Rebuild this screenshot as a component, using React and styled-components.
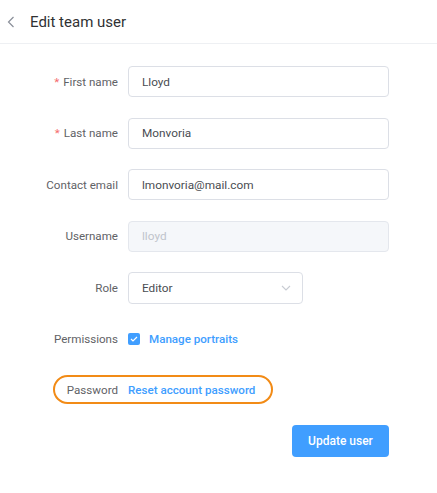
import React from 'react';
import styled, { createGlobalStyle } from 'styled-components';

const GlobalStyle = createGlobalStyle`
  body {
    margin: 0;
    background: #fff;
    font-family: Roboto, "Liberation Sans", Arial, sans-serif;
  }
`;

const ChevronLeft = () => (
  <svg width="8" height="12" viewBox="0 0 8 12" fill="none">
    <path d="M6.5 1L1.5 6l5 5" stroke="#8a8f99" strokeWidth="1.2" />
  </svg>
);

const ChevronDown = () => (
  <svg width="10" height="6" viewBox="0 0 10 6" fill="none">
    <path d="M1 1l4 4 4-4" stroke="#c8ccd3" strokeWidth="1.1" />
  </svg>
);

const Check = () => (
  <svg width="8" height="6" viewBox="0 0 8 6" fill="none">
    <path d="M1 3l2 2 4-4" stroke="#fff" strokeWidth="1.2" />
  </svg>
);

const App = () => {
  return (
    <Page>
      <GlobalStyle />
      <Header>
        <BackButton><ChevronLeft /></BackButton>
        <Title>Edit team user</Title>
      </Header>
      <Form>
        <Row>
          <Label required>First name</Label>
          <Input defaultValue="Lloyd" />
        </Row>
        <Row>
          <Label required>Last name</Label>
          <Input defaultValue="Monvoria" />
        </Row>
        <Row>
          <Label>Contact email</Label>
          <Input defaultValue="lmonvoria@mail.com" />
        </Row>
        <Row>
          <Label>Username</Label>
          <Input defaultValue="lloyd" disabled />
        </Row>
        <Row>
          <Label>Role</Label>
          <Select>
            <span>Editor</span>
            <ChevronDown />
          </Select>
        </Row>
        <Row>
          <Label>Permissions</Label>
          <CheckItem>
            <Box><Check /></Box>
            <LinkText>Manage portraits</LinkText>
          </CheckItem>
        </Row>
        <Highlight>
          <Label>Password</Label>
          <LinkText>Reset account password</LinkText>
        </Highlight>
        <Actions>
          <Button>Update user</Button>
        </Actions>
      </Form>
    </Page>
  );
};

const Page = styled.div`
  width: 437px;
  min-height: 493px;
  background: #fff;
`;

const Header = styled.div`
  display: flex;
  align-items: center;
  height: 43px;
  padding-left: 7px;
  border-bottom: 1px solid #eef0f3;
`;

const BackButton = styled.span`
  display: flex;
  align-items: center;
  width: 23px;
`;

const Title = styled.h1`
  margin: 0;
  font-size: 15px;
  font-weight: 400;
  color: #303133;
`;

const Form = styled.div`
  padding: 22px 48px 0 0;
`;

const Row = styled.div`
  display: flex;
  align-items: center;
  height: 31px;
  margin-bottom: 20.5px;
`;

const Label = styled.label`
  width: 118px;
  padding-right: 10px;
  box-sizing: content-box;
  flex-shrink: 0;
  text-align: right;
  font-size: 11.6px;
  color: #5f6266;
  &::before {
    content: ${p => (p.required ? '"*"' : 'none')};
    color: #f56c6c;
    margin-right: 4px;
  }
`;

const Input = styled.input`
  flex: 1;
  height: 31px;
  box-sizing: border-box;
  padding: 0 13px;
  border: 1px solid #dcdfe6;
  border-radius: 4px;
  font-family: inherit;
  font-size: 11.8px;
  color: #4a4d52;
  background: #fff;
  outline: none;
  &:disabled {
    background: #f5f7fa;
    border-color: #e4e7ed;
    color: #c0c4cc;
  }
`;

const Select = styled.div`
  display: flex;
  align-items: center;
  justify-content: space-between;
  width: 175px;
  height: 32px;
  box-sizing: border-box;
  padding: 0 11px 0 13px;
  border: 1px solid #dcdfe6;
  border-radius: 4px;
  font-size: 11.8px;
  color: #4a4d52;
`;

const CheckItem = styled.div`
  display: flex;
  align-items: center;
  gap: 9px;
`;

const Box = styled.span`
  display: flex;
  align-items: center;
  justify-content: center;
  width: 12px;
  height: 12px;
  border-radius: 2px;
  background: #409eff;
`;

const LinkText = styled.span`
  font-size: 11.6px;
  font-weight: 500;
  color: #409eff;
`;

const Highlight = styled.div`
  display: flex;
  align-items: center;
  width: 216px;
  height: 25px;
  margin-left: 53px;
  margin-bottom: 21px;
  border: 2.5px solid #f28b16;
  border-radius: 16px;
  & > label {
    width: 63px;
  }
`;

const Actions = styled.div`
  display: flex;
  justify-content: flex-end;
`;

const Button = styled.button`
  width: 97px;
  height: 32px;
  border: none;
  border-radius: 4px;
  background: #409eff;
  color: #fff;
  font-family: inherit;
  font-size: 12px;
  font-weight: 500;
`;

export default App;
